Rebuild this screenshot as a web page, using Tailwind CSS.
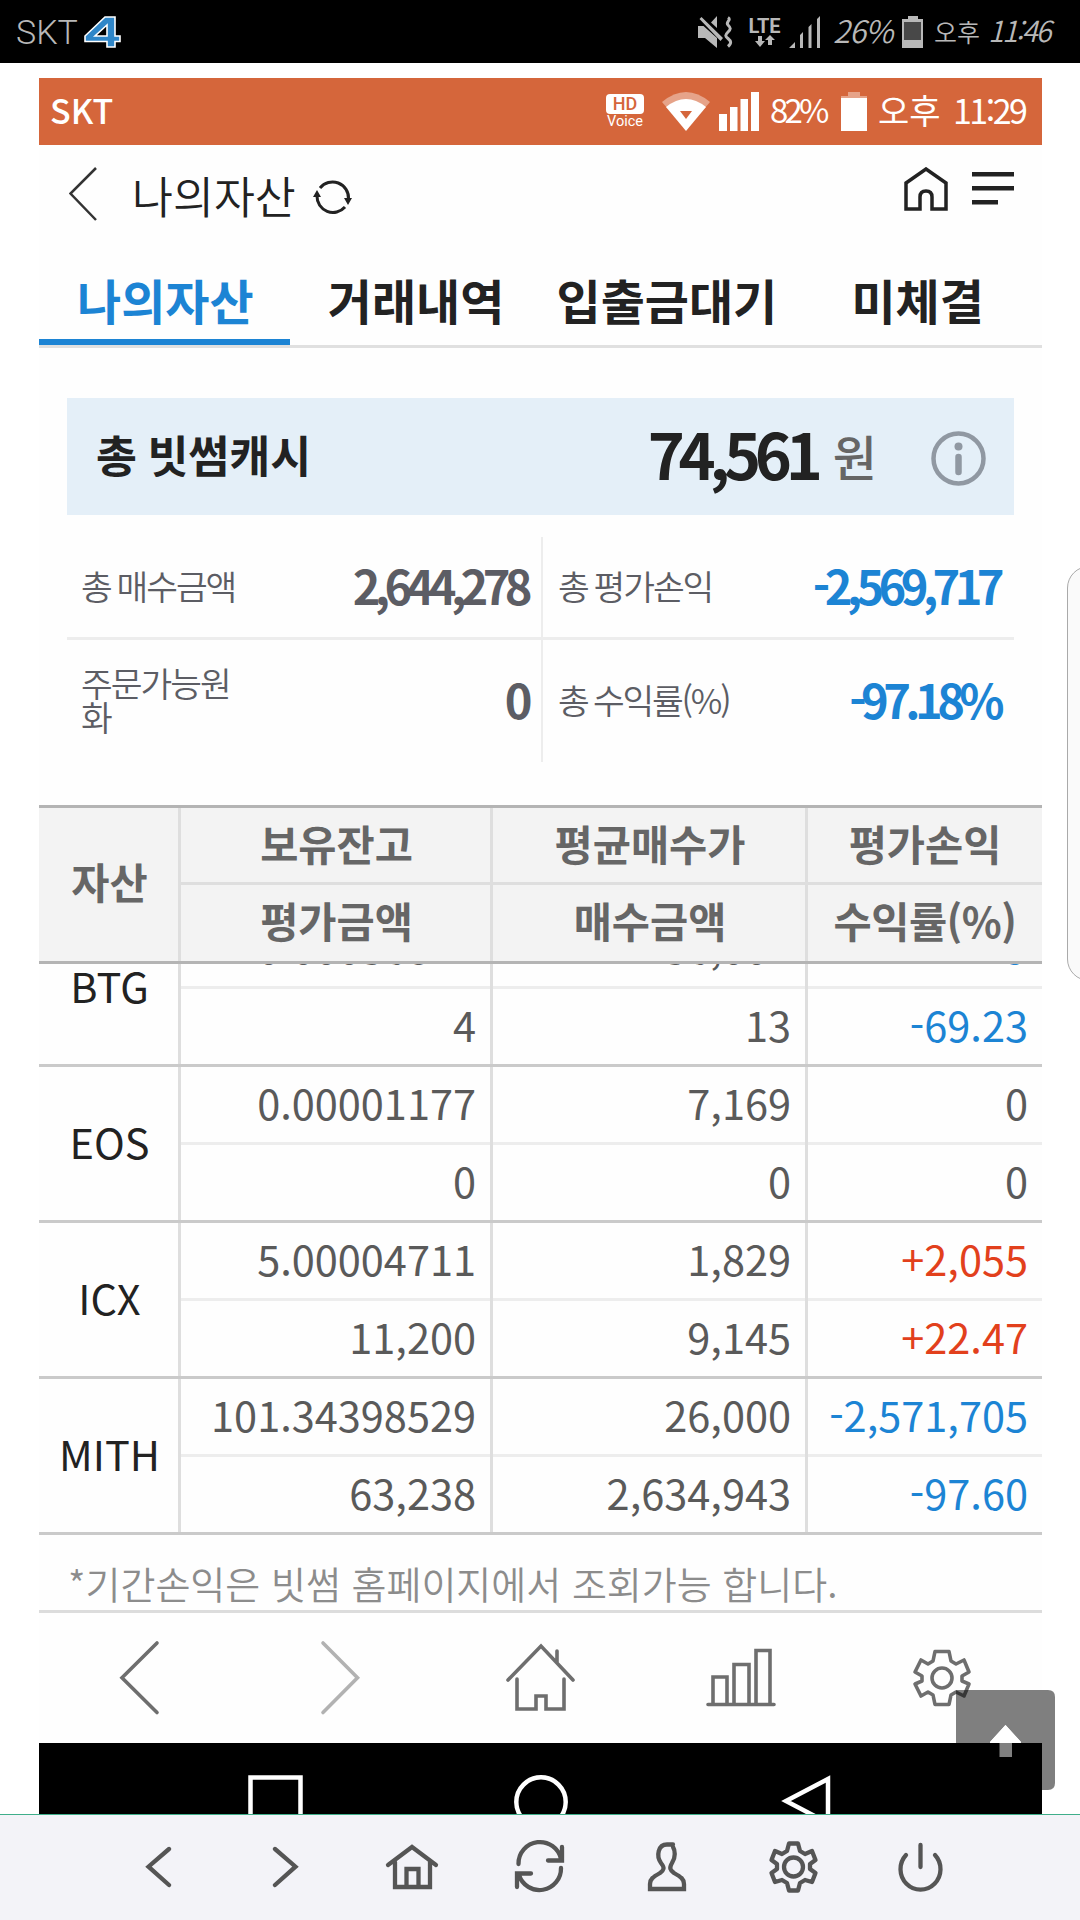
<!DOCTYPE html>
<html lang="ko">
<head>
    <meta charset="UTF-8">
    <meta name="viewport" content="width=device-width, initial-scale=1.0">
    <title>나의자산</title>
    <script src="https://cdn.jsdelivr.net/npm/@tailwindcss/browser@4"></script>
</head>
<body class="bg-white overflow-hidden font-['Noto_Sans_CJK_KR',sans-serif]">
    <div class="relative w-[1080px] h-[1920px] flex flex-col overflow-hidden">
        <!-- === Barre système === -->
        <div class="h-[63px] shrink-0 bg-black text-[#b8b8b8] flex items-center justify-between pl-4 pr-[25px]">
            <div class="flex items-center">
                <span class="w-[64px] text-[34px] leading-none font-light font-[Roboto,sans-serif]">SKT</span>
                <svg class="w-[38px] h-8 ml-1" viewBox="0 0 38 32" fill-rule="evenodd"><path d="M21 1H31V20H36V25.500H31V31H23V25.500H1V20ZM23 9L11 20H23Z" fill="#2f86c8" stroke="#fff" stroke-width="1.6"/></svg>
            </div>
            <div class="flex items-center">
                <svg class="w-[36px] h-8 -ml-[3px]" viewBox="0 0 36 32" fill="currentColor"><path d="M1 10H6.500L20 22V32L8 22H1ZM2.500 3L4.500 1L26 22L23.500 25ZM14 6.500L20 0V12Z"/><path d="M31 1.500C35 4 28 6 31 9S34 13 31 16S28 20 31 22.500S35 27 31 30.500" fill="none" stroke="currentColor" stroke-width="3"/></svg>
                <div class="flex flex-col items-center ml-[14px] w-[35px]">
                    <span class="text-[20px] leading-[18px] font-bold font-[Roboto,sans-serif]">LTE</span>
                    <svg class="w-5 h-3" viewBox="0 0 20 12" fill="currentColor"><path d="M3 1H7V6H10L5 12L0 6H3ZM13 10H17V5H20L15 0L10 5H13Z"/></svg>
                </div>
                <svg class="w-8 h-8 ml-[7px]" viewBox="0 0 32 32" fill="currentColor"><path d="M0 32L6 26V32ZM11 19L14 16V32H11ZM19.500 11L22.500 8V32H19.500ZM28 3L31 0V32H28Z"/></svg>
                <span class="w-[60px] ml-3 pb-1 text-[31px] leading-none font-[350] italic tracking-[-1px]">26%</span>
                <svg class="w-[21px] h-8 ml-[9px]" viewBox="0 0 21 32"><path d="M6 0H16V3H21V32H0V3H6Z" fill="#b8b8b8"/><path d="M2 6H19V24H2Z" fill="#484848"/></svg>
                <span class="w-[46px] ml-[11px] text-[25px] leading-none font-[350]">오후</span>
                <span class="w-[75px] pl-2 pb-1 text-[29px] leading-none font-[350] italic tracking-[-2px]">11:46</span>
            </div>
        </div>

        <div class="w-[1003px] ml-[39px] mt-[15px] flex flex-col bg-[#fefefe]">
            <!-- Barre opérateur -->
            <div class="h-[67px] bg-[#d5663b] text-white flex items-center justify-between pl-[11px] pr-[17px]">
                <span class="pb-1 text-[34px] leading-none font-medium">SKT</span>
                <div class="flex items-center">
                    <div class="flex flex-col items-center w-[38px]">
                        <span class="w-full h-5 rounded-sm bg-white text-[#d5663b] text-[18px] leading-5 font-medium text-center font-[Roboto,sans-serif]">HD</span>
                        <span class="text-[14.500px] leading-4 font-[Roboto,sans-serif]">Voice</span>
                    </div>
                    <svg class="w-12 h-[39px] ml-[18px]" viewBox="0 0 48 39"><path d="M0 10Q24 -10 48 10L42 17H6Z" fill="#fff" opacity=".4"/><path d="M4 15Q24 -1 44 15L24 39Z" fill="#fff"/><path d="M18 19H30L24 27Z" fill="#d5663b"/></svg>
                    <svg class="w-10 h-[39px] ml-[9px]" viewBox="0 0 40 39" fill="#fff"><path d="M0 22H8V39H0ZM11 15H18.500V39H11ZM21.500 7H29V39H21.500ZM32 0H40V39H32Z"/></svg>
                    <span class="w-[58px] ml-[11px] pb-1 text-[33px] leading-none font-normal tracking-[-3.800px]">82%</span>
                    <svg class="w-[26px] h-[39px] ml-[13px]" viewBox="0 0 26 39" fill="#fff"><path d="M7 0H19V4H26V7H0V4H7Z" opacity=".4"/><path d="M0 6H26V39H0Z"/></svg>
                    <span class="w-[75px] ml-[11px] pb-1 text-[34px] leading-none font-normal">오후</span>
                    <span class="w-[72px] pb-1 text-[34px] leading-none font-normal tracking-[-2.500px]">11:29</span>
                </div>
            </div>

            <!-- Titre -->
            <div class="h-[99px] flex items-start text-[#222] pl-[30px] pr-7 pt-[22px]">
                <svg class="w-7 h-[54px]" viewBox="0 0 28 54" fill="none" stroke="#333" stroke-width="2.500"><path d="M27 1L1.500 26.500L27 53"/></svg>
                <h1 class="ml-[35px] -mt-[2px] w-[166px] text-[44.500px] leading-[60px] font-[350] whitespace-nowrap">나의자산</h1>
                <svg class="w-[38px] h-[37px] mt-3 ml-4 overflow-visible" viewBox="0 0 38 37" fill="none" stroke="#222" stroke-width="3"><path d="M6 9A16 16 0 0 1 34.500 20M31 28A16 16 0 0 1 3 17"/><path d="M30 19H38L34 26ZM-1 18H7L3 11Z" fill="#222" stroke="none"/></svg>
                <svg class="w-11 h-11 ml-auto" viewBox="0 0 44 44" fill="none" stroke="#222" stroke-width="3.500"><path d="M2 16L22 2L42 16V42H28V30Q28 24 22 24T16 30V42H2Z"/></svg>
                <svg class="w-[42px] h-[33px] ml-6 mt-[5px]" viewBox="0 0 42 33" fill="#222"><path d="M0 0H42V4.500H0ZM0 14H42V18.500H0ZM0 28H26V32.500H0Z"/></svg>
            </div>

            <!-- Onglets -->
            <nav class="h-[104px] grid grid-cols-4 grid-rows-[101px] border-b-3 border-[#e0e0e0] text-[48px] leading-[110px] font-bold text-[#222] text-center whitespace-nowrap">
                <a class="pl-[2px] text-[#1c84d4] border-b-6 border-[#1c84d4]">나의자산</a>
                <a class="pl-[2px]">거래내역</a>
                <a class="pl-[2px]">입출금대기</a>
                <a class="pl-[2px]">미체결</a>
            </nav>

            <!-- Total -->
            <section class="mt-[50px] mx-7 h-[117px] bg-[#e4eff8] flex items-center pl-[29px] pr-7">
                <span class="pb-1 text-[44.500px] leading-none font-bold text-[#222] [word-spacing:-2px]">총 빗썸캐시</span>
                <span class="ml-auto pb-2 text-[63px] leading-none font-bold text-[#222] tracking-[-6.200px]">74,561</span>
                <span class="ml-4 pb-[3px] text-[48px] leading-none font-medium text-[#666]">원</span>
                <svg class="w-[55px] h-[55px] ml-[54px] mt-1" viewBox="0 0 55 55" fill="none" stroke="#9098a2"><circle cx="27.500" cy="27.500" r="25" stroke-width="4.500"/><path d="M27.500 26V41" stroke-width="6.500" stroke-linecap="round"/><circle cx="27.500" cy="15.500" r="4" fill="#9098a2" stroke="none"/></svg>
            </section>

            <section class="mt-[22px] mx-7 grid grid-cols-[476px_471px] text-[#5c5d64]">
                <div class="h-[103px] flex items-center justify-between border-r-2 border-b-3 border-[#ededed] pl-[14px] pr-[14px] pb-[5px]">
                    <span class="text-[34.500px] leading-[34px] font-[350] tracking-[-2px] [word-spacing:-2px]">총 매수금액</span>
                    <span class="text-[47px] leading-none font-bold tracking-[-5.600px]">2,644,278</span>
                </div>
                <div class="h-[103px] flex items-center justify-between border-b-3 border-[#ededed] pl-[15px] pr-[15px] pb-[5px]">
                    <span class="text-[34.500px] leading-[34px] font-[350] tracking-[-2px] [word-spacing:-2px]">총 평가손익</span>
                    <span class="text-[47px] leading-none font-bold tracking-[-5.600px] text-[#1c84d4]">-2,569,717</span>
                </div>
                <div class="h-[122px] flex items-center justify-between border-r-2 border-[#ededed] pl-[14px] pr-[14px] pb-[5px]">
                    <span class="w-[160px] text-[34.500px] leading-[34px] font-[350] tracking-[-2px] break-all">주문가능원화</span>
                    <span class="text-[47px] leading-none font-bold tracking-[-5.600px]">0</span>
                </div>
                <div class="h-[122px] flex items-center justify-between pl-[15px] pr-[15px] pb-[5px]">
                    <span class="text-[34.500px] leading-[34px] font-[350] tracking-[-2.200px] [word-spacing:-2px]">총 수익률(%)</span>
                    <span class="text-[47px] leading-none font-bold tracking-[-5.600px] text-[#1c84d4]">-97.18%</span>
                </div>
            </section>

            <!-- Tableau : en-tête fixe -->
            <div class="mt-[43px] h-[159px] grid grid-cols-[142px_312px_315px_234px] grid-rows-2 border-y-3 border-[#b4b4b4] bg-[#f3f3f3] text-[41.500px] leading-[70px] font-bold text-[#666] text-center whitespace-nowrap">
                <div class="row-span-2 border-r-3 border-[#dedede] pl-[2px] leading-[147px]">자산</div>
                <div class="border-r-3 border-b-3 border-[#dedede] pl-[2px]">보유잔고</div>
                <div class="border-r-3 border-b-3 border-[#dedede] pl-[2px]">평균매수가</div>
                <div class="border-b-3 border-[#dedede]">평가손익</div>
                <div class="border-r-3 border-[#dedede] pl-[2px]">평가금액</div>
                <div class="border-r-3 border-[#dedede] pl-[2px]">매수금액</div>
                <div class="tracking-[-0.500px]">수익률(%)</div>
            </div>
            <!-- Lignes défilées sous l'en-tête -->
            <div id="rows" class="h-[571px] flex flex-col justify-end overflow-hidden text-[41.500px] leading-[70px] font-normal text-[#5a5a5a] text-right"></div>

            <p class="h-[78px] pl-[29px] border-b-3 border-[#dcdcdc] text-[38px] leading-[96px] font-[350] text-[#8c8c8c] whitespace-nowrap">*기간손익은 빗썸 홈페이지에서 조회가능 합니다.</p>

            <!-- Barre de l'application -->
            <div class="h-[130px] relative">
                <svg class="w-[1003px] h-[130px]" viewBox="39 1613 1003 130" fill="none" stroke="#6e6e6e" stroke-width="3.600" stroke-linecap="round">
                    <path d="M157 1643L122 1677.700L157 1712.500"/>
                    <path d="M323 1643L357.500 1677.700L323 1712.500" stroke="#b2b2b2"/>
                    <path d="M508 1680L541 1646L573 1680M557 1651V1662M517 1679V1709H536V1696H546V1709H564V1679"/>
                    <path d="M708 1704.500H774M713 1704V1677H727V1704M734 1704V1664.500H749V1704M756 1704V1650.500H770V1704"/>
                    <circle cx="942" cy="1678" r="10"/>
                    <path d="M935 1651.500H949L951 1661L956 1664L964 1660L969 1672L962 1676V1681L969 1684L964 1696L956 1692L951 1695L949 1704.500H935L933 1695L928 1692L921 1696L915 1684L922 1681V1676L915 1672L921 1660L928 1664L933 1661Z" stroke-linejoin="round"/>
                </svg>
            </div>

            <!-- Touches Android -->
            <div class="h-[71px] bg-black">
                <svg class="w-[1003px] h-[71px]" viewBox="39 1743 1003 71" fill="none" stroke="#fff" stroke-width="4.500">
                    <path d="M250.500 1820V1777.500H300.500V1820"/>
                    <circle cx="541" cy="1802" r="24.700"/>
                    <path d="M828 1779V1823L786 1801Z"/>
                </svg>
            </div>
        </div>

        <!-- === Barre du navigateur === -->
        <footer class="h-[106px] shrink-0 border-t border-[#3fae8a] bg-[#f3f3f8]">
            <svg class="w-[1080px] h-[105px]" viewBox="0 1815 1080 105" fill="none" stroke="#555" stroke-width="4.300" stroke-linecap="round">
                <path d="M169 1849L148.500 1866.700L169 1885M275 1849L295.500 1866.700L275 1885"/>
                <path d="M388 1865L412 1847L436 1865M395 1862V1887H430V1862M406.500 1886V1869H418.500V1886"/>
                <path d="M518.500 1864A21.500 21.500 0 0 1 561 1859M548 1860.500H562V1847M561 1868A21.500 21.500 0 0 1 519 1875M531 1873.500H517V1887"/>
                <path d="M673 1844.500H667C658 1844.500 656 1856 661 1863C665 1868 664 1870 660 1873C653 1877 650 1879 650 1884V1889H684V1884C684 1879 681 1877 674 1873C670 1870 669 1868 672 1863C676 1857 675 1850 673 1847"/>
                <circle cx="793.500" cy="1867" r="9.500"/>
                <path d="M789 1843.500H798L800 1851L805 1854L812 1851L815.500 1860L810 1864V1869L815.500 1873L812 1882L805 1880L800 1883L798 1890.500H789L787 1883L782 1880L775 1882L771.500 1873L777 1869V1864L771.500 1860L775 1851L782 1854L787 1851Z" stroke-linejoin="round"/>
                <path d="M920.500 1845V1867M906 1855A20 20.500 0 1 0 935 1855"/>
            </svg>
        </footer>

        <!-- Bouton haut de page -->
        <svg class="absolute left-[956px] top-[1690px] w-[99px] h-[100px]" viewBox="0 0 99 100"><path d="M0 0H92Q99 0 99 7V93Q99 100 92 100H0ZM49.500 35L34 52H43.500V67H56V52H65Z" fill-rule="evenodd" fill="#000" opacity=".5"/><path d="M43.500 53H56V67H43.500Z" fill="#808080"/><path d="M34 52H65V53H34ZM49.500 35L34 52H65Z" fill="#fff"/></svg>
        <!-- Poignée latérale -->
        <div class="absolute left-[1067px] top-[566px] w-[60px] h-[415px] rounded-[22px] border border-[#aaa] bg-[#fafafa]"></div>
    </div>

    <script>
        const BLUE = 'text-[#1c84d4]';
        const RED = 'text-[#e2401c]';
        const assets = [
            ['BTG', ['0.00036814', '4'], ['36,007', '13'], ['-9', '-69.23'], BLUE],
            ['EOS', ['0.00001177', '0'], ['7,169', '0'], ['0', '0'], ''],
            ['ICX', ['5.00004711', '11,200'], ['1,829', '9,145'], ['+2,055', '+22.47'], RED],
            ['MITH', ['101.34398529', '63,238'], ['26,000', '2,634,943'], ['-2,571,705', '-97.60'], BLUE],
        ];
        const cell = (pair, cls) => `
            <div class="${cls}">
                <div class="h-[78px] border-b-3 border-[#ededed]">${pair[0]}</div>
                <div class="h-[75px]">${pair[1]}</div>
            </div>`;
        document.getElementById('rows').innerHTML = assets.map(([name, bal, price, pl, color]) => `
            <div class="h-[156px] shrink-0 grid grid-cols-[142px_312px_315px_234px] border-b-3 border-[#cacaca]">
                <div class="border-r-3 border-[#dedede] pl-[2px] text-center leading-[148px] text-[#222]">${name}</div>
                ${cell(bal, 'border-r-3 border-[#dedede] [&>div]:pr-[14px]')}
                ${cell(price, 'border-r-3 border-[#dedede] [&>div]:pr-[14px]')}
                ${cell(pl, '[&>div]:pr-[14px] ' + color)}
            </div>`).join('');
    </script>
</body>
</html>
